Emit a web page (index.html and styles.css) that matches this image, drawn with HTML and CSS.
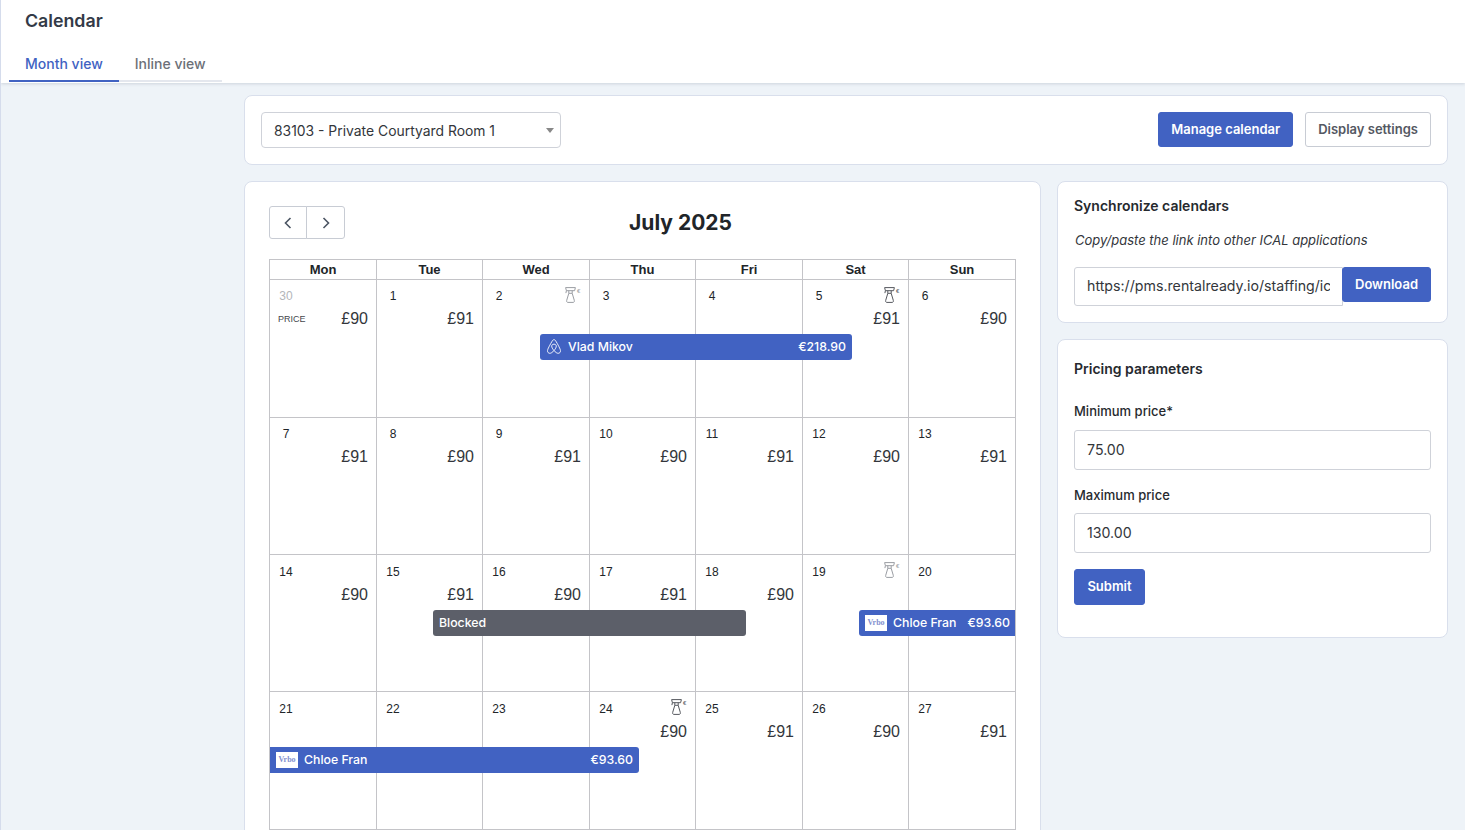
FILE: index.html
```html
<!DOCTYPE html>
<html lang="en">
<head>
  <meta charset="UTF-8">
  <title>Calendar</title>
  <link rel="stylesheet" href="styles.css">
</head>
<body>

<!-- Header -->
<div class="topbar">
  <h1>Calendar</h1>
  <div class="tabs">
    <a class="tab active">Month view</a>
    <a class="tab">Inline view</a>
  </div>
</div>

<div class="content">

  <!-- Listing selector -->
  <div class="card toolbar">
    <div class="select">
      <span>83103 - Private Courtyard Room 1</span>
      <i class="caret"></i>
    </div>
    <div class="toolbar-actions">
      <button class="btn btn-primary">Manage calendar</button>
      <button class="btn btn-outline">Display settings</button>
    </div>
  </div>

  <div class="columns">

    <!-- Calendar -->
    <div class="card calendar">
      <div class="cal-head">
        <div class="nav-btns">
          <button class="nav-btn"><svg width="12" height="14" viewBox="0 0 12 14"><path d="M8.5 2 3.5 7l5 5" fill="none" stroke="#4b5563" stroke-width="1.6"/></svg></button>
          <button class="nav-btn"><svg width="12" height="14" viewBox="0 0 12 14"><path d="M3.5 2l5 5-5 5" fill="none" stroke="#4b5563" stroke-width="1.6"/></svg></button>
        </div>
        <h2>July 2025</h2>
      </div>

      <div class="cal-table">
        <div class="weekdays">
          <div>Mon</div><div>Tue</div><div>Wed</div><div>Thu</div><div>Fri</div><div>Sat</div><div>Sun</div>
        </div>

        <div class="week week-tall">
          <div class="day"><span class="num muted">30</span><div class="price-row"><span class="price-label">PRICE</span><span class="price">£90</span></div></div>
          <div class="day"><span class="num">1</span><div class="price-row"><span class="price">£91</span></div></div>
          <div class="day"><span class="num">2</span><span class="clean light"><svg width="11" height="16" viewBox="0 0 11 16"><use href="#spray"/></svg><span>€</span></span></div>
          <div class="day"><span class="num">3</span></div>
          <div class="day"><span class="num">4</span></div>
          <div class="day"><span class="num">5</span><span class="clean"><svg width="11" height="16" viewBox="0 0 11 16"><use href="#spray"/></svg><span>€</span></span><div class="price-row"><span class="price">£91</span></div></div>
          <div class="day"><span class="num">6</span><div class="price-row"><span class="price">£90</span></div></div>
          <div class="event ev-vlad">
            <svg class="airbnb" width="14" height="15" viewBox="0 0 14 15"><path d="M7 11.6C5.6 9.9 4.7 8.4 4.7 7.1 4.7 5.9 5.7 5.2 7 5.2s2.3.7 2.3 1.9c0 1.3-.9 2.8-2.3 4.5Zm0 0c1.6 1.8 3 2.7 4.2 2.7 1.4 0 2.3-1.1 2.3-2.4 0-1.2-.9-3.4-4.6-9.7C8.3 1.1 7.8.7 7 .7s-1.3.4-1.9 1.5C1.4 8.5.5 10.7.5 11.9c0 1.3.9 2.4 2.3 2.4 1.2 0 2.6-.9 4.2-2.7Z" fill="none" stroke="#fff" stroke-width=".9"/></svg>
            <span class="ev-name">Vlad Mikov</span><span class="ev-amount">€218.90</span>
          </div>
        </div>

        <div class="week">
          <div class="day"><span class="num">7</span><div class="price-row"><span class="price">£91</span></div></div>
          <div class="day"><span class="num">8</span><div class="price-row"><span class="price">£90</span></div></div>
          <div class="day"><span class="num">9</span><div class="price-row"><span class="price">£91</span></div></div>
          <div class="day"><span class="num">10</span><div class="price-row"><span class="price">£90</span></div></div>
          <div class="day"><span class="num">11</span><div class="price-row"><span class="price">£91</span></div></div>
          <div class="day"><span class="num">12</span><div class="price-row"><span class="price">£90</span></div></div>
          <div class="day"><span class="num">13</span><div class="price-row"><span class="price">£91</span></div></div>
        </div>

        <div class="week week-low">
          <div class="day"><span class="num">14</span><div class="price-row"><span class="price">£90</span></div></div>
          <div class="day"><span class="num">15</span><div class="price-row"><span class="price">£91</span></div></div>
          <div class="day"><span class="num">16</span><div class="price-row"><span class="price">£90</span></div></div>
          <div class="day"><span class="num">17</span><div class="price-row"><span class="price">£91</span></div></div>
          <div class="day"><span class="num">18</span><div class="price-row"><span class="price">£90</span></div></div>
          <div class="day"><span class="num">19</span><span class="clean light"><svg width="11" height="16" viewBox="0 0 11 16"><use href="#spray"/></svg><span>€</span></span></div>
          <div class="day"><span class="num">20</span></div>
          <div class="event ev-blocked"><span class="ev-name">Blocked</span></div>
          <div class="event ev-chloe1">
            <span class="vrbo">Vrbo</span>
            <span class="ev-name">Chloe Fran</span><span class="ev-amount">€93.60</span>
          </div>
        </div>

        <div class="week week-low week-tall">
          <div class="day"><span class="num">21</span></div>
          <div class="day"><span class="num">22</span></div>
          <div class="day"><span class="num">23</span></div>
          <div class="day"><span class="num">24</span><span class="clean"><svg width="11" height="16" viewBox="0 0 11 16"><use href="#spray"/></svg><span>€</span></span><div class="price-row"><span class="price">£90</span></div></div>
          <div class="day"><span class="num">25</span><div class="price-row"><span class="price">£91</span></div></div>
          <div class="day"><span class="num">26</span><div class="price-row"><span class="price">£90</span></div></div>
          <div class="day"><span class="num">27</span><div class="price-row"><span class="price">£91</span></div></div>
          <div class="event ev-chloe2">
            <span class="vrbo">Vrbo</span>
            <span class="ev-name">Chloe Fran</span><span class="ev-amount">€93.60</span>
          </div>
        </div>
      </div>
    </div>

    <!-- Right column -->
    <div class="side">
      <div class="card sync">
        <h3>Synchronize calendars</h3>
        <p class="hint">Copy/paste the link into other ICAL applications</p>
        <div class="link-row">
          <input class="input link-input" type="text" value="https://pms.rentalready.io/staffing/ical/83103">
          <button class="btn btn-primary">Download</button>
        </div>
      </div>

      <div class="card pricing">
        <h3>Pricing parameters</h3>
        <label>Minimum price*</label>
        <input class="input" type="text" value="75.00">
        <label>Maximum price</label>
        <input class="input" type="text" value="130.00">
        <button class="btn btn-primary">Submit</button>
      </div>
    </div>

  </div>
</div>

<svg width="0" height="0" class="defs">
  <symbol id="spray" viewBox="0 0 11 16">
    <path d="M.6.6h9.8l-.8 3.1H1.4ZM1.4 3.7.9 6.1M3.8 3.7v2.6h3.4V3.7M3.8 6.3 1.7 13.4c-.3 1.2.2 2 1.2 2h5.2c1 0 1.5-.8 1.2-2L7.2 6.3" fill="none" stroke="currentColor" stroke-width="1"/>
  </symbol>
</svg>

</body>
</html>
```

FILE: styles.css
```css
/* Base Styles */
* {
  margin: 0;
  padding: 0;
  box-sizing: border-box;
}

html, body {
  height: 830px;
  overflow: hidden;
}

body {
  background: #eef3f8;
  border-left: 1px solid #d5dcec;
  font-family: Inter, "Liberation Sans", sans-serif;
  color: #212529;
}

.defs {
  position: absolute;
}

/* Header */
.topbar {
  height: 83px;
  background: #fff;
  box-shadow: 0 1px 3px rgba(60, 70, 100, 0.18);
  padding: 11px 0 0 8px;
}

.topbar h1 {
  font-size: 17.8px;
  line-height: 20px;
  font-weight: 600;
  color: #333a47;
  padding-left: 16px;
}

.tabs {
  display: flex;
  width: 213px;
  margin-top: 14px;
  border-bottom: 2px solid #e4e7ee;
}

.tab {
  font-size: 14px;
  line-height: 20px;
  font-weight: 500;
  color: #6c7078;
  padding: 9px 16px 6px;
  margin-bottom: -2px;
}

.tab.active {
  color: #4162c2;
  border-bottom: 2px solid #4162c2;
}

/* Main content */
.content {
  padding: 12px 17px 0 243px;
}

.card {
  background: #fff;
  border: 1px solid #d9dfec;
  border-radius: 8px;
}

.toolbar {
  height: 70px;
  padding: 16px 16px 0;
  display: flex;
  align-items: flex-start;
  justify-content: space-between;
}

.select {
  width: 300px;
  height: 36px;
  border: 1px solid #cfd2d9;
  border-radius: 4px;
  padding: 1px 12px 0;
  display: flex;
  align-items: center;
  justify-content: space-between;
  font-size: 13.9px;
  color: #33363b;
}

.caret {
  margin-right: -6px;
  border-left: 4px solid transparent;
  border-right: 4px solid transparent;
  border-top: 5px solid #888;
}

.toolbar-actions {
  display: flex;
  gap: 12px;
}

.btn {
  height: 35px;
  padding: 0 12px 2px;
  border: 1px solid #4162c2;
  border-radius: 3px;
  font-family: inherit;
  font-size: 13px;
  font-weight: 600;
  background: #4162c2;
  color: #fff;
}

.btn-outline {
  background: #fff;
  border-color: #c8ccd4;
  color: #545862;
}

.columns {
  display: flex;
  gap: 16px;
  margin-top: 16px;
  align-items: flex-start;
}

/* Calendar */
.calendar {
  width: 797px;
  padding: 24px 24px 40px;
  flex-shrink: 0;
}

.cal-head {
  display: flex;
  align-items: center;
  height: 33px;
  margin-bottom: 20px;
}

.cal-head h2 {
  flex: 1;
  text-align: center;
  font-size: 21px;
  font-weight: 700;
  color: #212529;
}

.nav-btns {
  display: flex;
}

.nav-btn {
  width: 38px;
  height: 33px;
  border: 1px solid #c8ccd4;
  background: #fff;
  border-radius: 3px 0 0 3px;
  display: flex;
  align-items: center;
  justify-content: center;
}

.nav-btn + .nav-btn {
  width: 39px;
  margin-left: -1px;
  border-radius: 0 3px 3px 0;
}

.cal-table {
  width: 747px;
  border-top: 1px solid #c4c4c8;
  border-left: 1px solid #c4c4c8;
  font-family: "Liberation Sans", Arial, sans-serif;
}

.weekdays, .week {
  display: grid;
  grid-template-columns: 107px 106px 107px 106px 107px 106px 107px;
}

.weekdays div {
  height: 20px;
  line-height: 19px;
  text-align: center;
  font-size: 13px;
  font-weight: 700;
  color: #212529;
  border-right: 1px solid #c4c4c8;
  border-bottom: 1px solid #c4c4c8;
}

.week {
  position: relative;
  height: 137px;
}

.week-tall {
  height: 138px;
}

.day {
  position: relative;
  padding: 9px 8px 0 9px;
  border-right: 1px solid #c4c4c8;
  border-bottom: 1px solid #c4c4c8;
}

.week-low .day {
  padding-top: 10px;
}

.num {
  display: block;
  width: 14px;
  font-size: 12px;
  line-height: 14px;
  text-align: center;
  white-space: nowrap;
  color: #212529;
}

.num.muted {
  color: #b4b6ba;
}

.price-row {
  display: flex;
  justify-content: flex-end;
  align-items: center;
  margin-top: 6px;
  height: 20px;
}

.price-label {
  flex: 1;
  margin-left: -1px;
  font-size: 9px;
  color: #44474c;
}

.price {
  font-size: 16px;
  color: #33363b;
}

.clean {
  position: absolute;
  top: 7px;
  right: 8px;
  width: 16px;
  height: 16px;
  display: flex;
  color: #55585e;
}

.clean.light {
  color: #9a9da3;
}

.clean span {
  font-size: 6px;
  line-height: 8px;
  margin-left: 1px;
}

/* Events sit over the day cells */
.event {
  position: absolute;
  height: 26px;
  display: flex;
  align-items: center;
  padding: 0 6px 2px;
  background: #4162c2;
  color: #fff;
  font-family: Inter, "Liberation Sans", sans-serif;
  font-size: 12.3px;
  font-weight: 500;
  border-radius: 3px;
}

.ev-name {
  flex: 1;
  white-space: nowrap;
}

.airbnb {
  margin-right: 7px;
  margin-top: 1px;
}

.vrbo {
  width: 22px;
  height: 16px;
  margin: 2px 6px 0 0;
  background: #fff;
  color: #8391cf;
  font-family: "Liberation Serif", serif;
  font-size: 8px;
  font-weight: 700;
  line-height: 16px;
  text-align: center;
}

.ev-vlad {
  left: 270px;
  top: 54px;
  width: 312px;
  padding-left: 7px;
}

.ev-blocked {
  left: 163px;
  top: 55px;
  width: 313px;
  background: #5c5f69;
}

.ev-chloe1 {
  left: 589px;
  top: 55px;
  width: 156px;
  padding-right: 5px;
  border-radius: 3px 0 0 3px;
}

.ev-chloe2 {
  left: 0;
  top: 55px;
  width: 369px;
  border-radius: 0 3px 3px 0;
}

/* Right column */
.side {
  flex: 1;
  display: flex;
  flex-direction: column;
  gap: 16px;
}

.side h3 {
  font-size: 14px;
  line-height: 20px;
  font-weight: 600;
  color: #26292e;
}

.sync {
  height: 142px;
  padding: 14px 16px 0;
}

.hint {
  font-size: 13px;
  line-height: 18px;
  font-style: italic;
  color: #33363b;
  margin-top: 15px;
  padding-left: 1px;
}

.link-row {
  display: flex;
  margin-top: 18px;
  align-items: flex-start;
}

.input {
  display: block;
  width: 100%;
  height: 40px;
  border: 1px solid #cfd2d9;
  border-radius: 3px;
  padding: 0 12px 2px;
  font-family: inherit;
  font-size: 14.2px;
  color: #33363b;
  background: #fff;
}

.link-input {
  flex: 1;
  min-width: 0;
  height: 39px;
  border-radius: 3px 0 0 3px;
}

.link-row .btn {
  flex-shrink: 0;
  width: 89px;
  padding: 0 0 2px;
  margin-left: -1px;
}

.pricing {
  height: 299px;
  padding: 19px 16px 0;
}

.pricing label {
  display: block;
  font-size: 13px;
  line-height: 18px;
  font-weight: 500;
  color: #26292e;
  margin-top: 23px;
  margin-bottom: 10px;
}

.pricing .input + label {
  margin-top: 16px;
  margin-bottom: 9px;
}

.pricing .btn {
  margin-top: 16px;
  height: 36px;
  width: 71px;
  padding: 0 0 2px;
}
```
